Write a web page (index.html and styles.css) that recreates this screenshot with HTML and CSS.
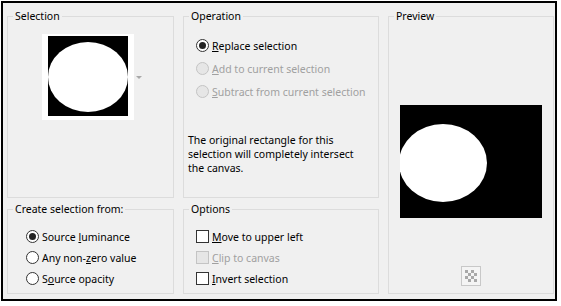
FILE: index.html
```html
<!DOCTYPE html>
<html lang="en">
<head>
  <meta charset="UTF-8" />
  <title>Create selection from</title>
  <link rel="stylesheet" href="styles.css">
</head>
<body>

  <div class="dialog">

    <fieldset class="group selection">
      <legend>Selection</legend>
      <div class="thumb-row">
        <div class="thumb">
          <svg width="80" height="80" viewBox="0 0 80 80">
            <rect width="80" height="80" fill="#000"/>
            <ellipse cx="40" cy="41" rx="40" ry="35" fill="#fff"/>
          </svg>
        </div>
        <span class="drop-arrow"></span>
      </div>
    </fieldset>

    <fieldset class="group operation">
      <legend>Operation</legend>
      <div class="choices">
        <label class="choice"><span class="radio checked"></span><span><u>R</u>eplace selection</span></label>
        <label class="choice disabled"><span class="radio"></span><span><u>A</u>dd to current selection</span></label>
        <label class="choice disabled"><span class="radio"></span><span><u>S</u>ubtract from current selection</span></label>
      </div>
      <p class="note">The original rectangle for this selection will completely intersect the canvas.</p>
    </fieldset>

    <fieldset class="group preview">
      <legend>Preview</legend>
      <div class="preview-area">
        <svg width="142" height="113" viewBox="0 0 142 113">
          <rect width="142" height="113" fill="#000"/>
          <ellipse cx="43" cy="58" rx="44" ry="39" fill="#fff"/>
        </svg>
      </div>
      <div class="checker">
        <svg width="18" height="18" viewBox="0 0 18 18">
          <rect width="18" height="18" fill="#f4f4f4"/>
          <g fill="#a8a8a8">
            <rect x="3" y="3" width="3" height="3"/><rect x="9" y="3" width="3" height="3"/>
            <rect x="6" y="6" width="3" height="3"/><rect x="12" y="6" width="3" height="3"/>
            <rect x="3" y="9" width="3" height="3"/><rect x="9" y="9" width="3" height="3"/>
            <rect x="6" y="12" width="3" height="3"/><rect x="12" y="12" width="3" height="3"/>
          </g>
        </svg>
      </div>
    </fieldset>

    <fieldset class="group source">
      <legend>Create selection from:</legend>
      <div class="choices">
        <label class="choice"><span class="radio checked"></span><span>Source <u>l</u>uminance</span></label>
        <label class="choice"><span class="radio"></span><span>Any non-<u>z</u>ero value</span></label>
        <label class="choice"><span class="radio"></span><span>S<u>o</u>urce opacity</span></label>
      </div>
    </fieldset>

    <fieldset class="group options">
      <legend>Options</legend>
      <div class="choices">
        <label class="choice"><span class="check"></span><span><u>M</u>ove to upper left</span></label>
        <label class="choice disabled"><span class="check"></span><span><u>C</u>lip to canvas</span></label>
        <label class="choice"><span class="check"></span><span><u>I</u>nvert selection</span></label>
      </div>
    </fieldset>

  </div>

</body>
</html>
```

FILE: styles.css
```css
body {
  margin: 0;
  background-color: #fff;
  font-family: 'Noto Sans', 'Open Sans', sans-serif;
  font-size: 10.5px;
  color: #000;
}

.dialog {
  box-sizing: border-box;
  width: 556px;
  height: 300px;
  margin: 1px 0 0 1px;
  border: 2px solid #000;
  background-color: #f0f0f0;
  padding: 5px 0 0 4px;
  display: grid;
  grid-template-columns: 167px 196px 166px;
  grid-template-rows: 190px 93px;
  column-gap: 9px;
  row-gap: 3px;
}

.group {
  margin: 0;
  padding: 0 6px;
  border: 1px solid #dcdcdc;
  min-width: 0;
}

.group legend {
  margin-left: -1px;
  padding: 0 2px;
  line-height: 16px;
}

/* selection thumbnail */
.thumb-row {
  display: flex;
  justify-content: center;
  align-items: center;
  margin-top: 10px;
  padding-left: 2px;
}

.thumb {
  width: 92px;
  height: 86px;
  background-color: #fff;
  box-sizing: border-box;
  padding: 2px 0 0 6px;
}

.thumb svg {
  display: block;
}

.drop-arrow {
  width: 0;
  height: 0;
  margin-left: 2px;
  border-left: 3px solid transparent;
  border-right: 3px solid transparent;
  border-top: 3px solid #a8a8a8;
}

/* radio and check rows */
.choices {
  display: flex;
  flex-direction: column;
}

.choice {
  display: flex;
  align-items: center;
  gap: 3px;
  height: 21px;
}

.choice.disabled {
  color: #a0a0a0;
}

.radio {
  box-sizing: border-box;
  width: 13px;
  height: 13px;
  border: 1px solid #333;
  border-radius: 50%;
  background-color: #fff;
  display: flex;
  justify-content: center;
  align-items: center;
}

.radio.checked::after {
  content: '';
  width: 7px;
  height: 7px;
  border-radius: 50%;
  background-color: #222;
}

.check {
  box-sizing: border-box;
  width: 13px;
  height: 13px;
  border: 1px solid #333;
  background-color: #fff;
}

.disabled .radio,
.disabled .check {
  border-color: #c4c4c4;
  background-color: #e6e6e6;
}

.operation .choices {
  margin: 10px 0 0 6px;
}

.operation .choice {
  height: 23px;
}

.note {
  margin: 30px 0 0 -2px;
  line-height: 14px;
}

.source .choices {
  margin: 9px 0 0 12px;
}

.options .choices {
  margin: 9px 0 0 6px;
}

/* preview */
.preview {
  grid-row: 1 / 3;
  grid-column: 3;
  display: flex;
  flex-direction: column;
  align-items: center;
}

.preview-area {
  flex: 1;
  display: flex;
  align-items: center;
  padding-top: 32px;
}

.preview-area svg {
  display: block;
}

.checker {
  border: 1px solid #c8c8c8;
  margin-bottom: 7px;
  line-height: 0;
}
```
